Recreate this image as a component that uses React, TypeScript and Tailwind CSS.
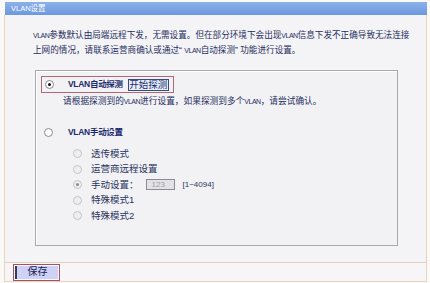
import React from 'react';

const font = "font-['Liberation_Sans','Noto_Sans_CJK_SC',sans-serif]";

// the reference renders "VLAN" in a narrow small face
function Vlan() {
  return <span className="text-[7px] tracking-[-0.5px]">VLAN</span>;
}

function Radio({ checked, disabled }: { checked?: boolean; disabled?: boolean }) {
  return (
    <span
      className={`flex h-[9px] w-[9px] shrink-0 items-center justify-center rounded-full border ${
        disabled ? 'border-[#c4c4c8] bg-[#eeeeef]' : 'border-[#8a8a90] bg-white'
      }`}
    >
      {checked && (
        <span className={`h-[3px] w-[3px] rounded-full ${disabled ? 'bg-[#8a8a8a]' : 'bg-[#111]'}`} />
      )}
    </span>
  );
}

function SubOption({ label, checked, children }: { label: string; checked?: boolean; children?: React.ReactNode }) {
  return (
    <div className="flex h-[15.5px] items-center pl-[37px]">
      <Radio disabled checked={checked} />
      <span className="ml-[9px] text-[9.5px] text-[#2a3560]">{label}</span>
      {children}
    </div>
  );
}

export default function App() {
  return (
    <div className={`h-[283px] w-[430px] bg-[#fbf9f5] pl-[4px] pr-[3px] pt-[2px] ${font}`}>
      {/* title bar */}
      <div className="ml-px flex h-[13px] items-center bg-gradient-to-b from-[#8cb1ec] to-[#6c98dc] pl-[6px] text-[7.5px] text-white">
        VLAN设置
      </div>

      <div className="flex h-[267px] flex-col border-x border-b border-[#e9d6ba] bg-[#f4f4f6]">
        <p className="whitespace-nowrap pl-[28px] pt-[13px] text-[8.6px] leading-[14px] text-[#1e2d5e]">
          <Vlan />参数默认由局端远程下发，无需设置。但在部分环境下会出现<Vlan />信息下发不正确导致无法连接
          <br />
          上网的情况，请联系运营商确认或通过“ <Vlan />自动探测” 功能进行设置。
        </p>

        {/* options box */}
        <div className="ml-[30px] mt-[12px] h-[176px] w-[363px] border border-[#a9a9ad] bg-[#f2f2f4] shadow-[inset_1px_1px_0_#ffffff]">
          <div className="ml-[5px] mt-[5px] flex h-[17px] w-[133px] items-center border border-[#b06878] pl-[3px]">
            <Radio checked />
            <span className="ml-[14px] text-[8.5px] font-bold tracking-[-0.3px] text-[#1b2a6e]">VLAN自动探测</span>
            <button className="ml-[5px] flex h-[12px] w-[41px] items-center justify-center border border-[#3c4a78] bg-[#e6edf9] text-[9.5px] leading-none text-[#1b2a6e]">
              开始探测
            </button>
          </div>
          <p className="mt-[2px] whitespace-nowrap pl-[27px] text-[8.7px] leading-[12px] text-[#1e2d5e]">
            请根据探测到的<Vlan />进行设置，如果探测到多个<Vlan />，请尝试确认。
          </p>

          <div className="mt-[18px] flex h-[12px] items-center pl-[8px]">
            <Radio />
            <span className="ml-[15px] text-[8.5px] font-bold tracking-[-0.3px] text-[#1b2a6e]">VLAN手动设置</span>
          </div>

          <div className="mt-[8px]">
            <SubOption label="透传模式" />
            <SubOption label="运营商远程设置" />
            <SubOption label="手动设置：" checked>
              <span className="ml-[7px] flex h-[11px] w-[29px] items-center border border-[#8c8c94] bg-[#e2e2e6] pl-[5px] text-[8px] text-[#a0a0a8]">
                123
              </span>
              <span className="ml-[8px] text-[8px] text-[#2a3560]">[1~4094]</span>
            </SubOption>
            <SubOption label="特殊模式1" />
            <SubOption label="特殊模式2" />
          </div>
        </div>

        {/* bottom bar */}
        <div className="mt-auto flex h-[19px] items-center border-t border-[#e2d2bc] bg-[#f7f5f8] pl-[8px]">
          <div className="flex h-[17px] w-[47px] items-center justify-center border border-[#a05565] p-px">
            <button className="flex h-full w-full items-center justify-center border-l-2 border-[#3a3a58] bg-[#cdd2f6] text-[10px] leading-none text-[#1b2050]">
              保存
            </button>
          </div>
        </div>
      </div>
    </div>
  );
}
